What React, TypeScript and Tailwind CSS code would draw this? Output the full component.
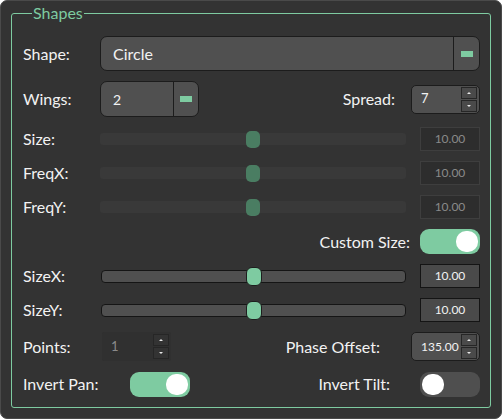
import React from 'react';

const GREEN = 'bg-[#7ecba1]';

function Label({ children, className = '' }: { children: React.ReactNode; className?: string }) {
  return <span className={`text-[16px] leading-none text-[#f2f2f2] ${className}`}>{children}</span>;
}

function DropArrow() {
  return <span className={`block w-[12px] h-[6px] ${GREEN}`} />;
}

function ComboBox({
  value,
  width,
  buttonWidth,
  textSize,
}: {
  value: string;
  width?: string;
  buttonWidth: string;
  textSize: string;
}) {
  return (
    <div
      className={`flex h-full ${width ?? 'flex-1'} rounded-[7px] border border-[#1c1c1c] bg-[#505050] overflow-hidden`}
    >
      <div className={`flex-1 flex items-center pl-[12px] ${textSize} text-[#f2f2f2]`}>{value}</div>
      <div className={`${buttonWidth} flex items-center justify-center border-l border-[#1c1c1c]`}>
        <DropArrow />
      </div>
    </div>
  );
}

function SpinArrows({ disabled = false }: { disabled?: boolean }) {
  const btn = `w-[16px] h-[12px] flex items-center justify-center border border-[#262626] ${
    disabled ? 'bg-[#333333]' : 'bg-[#4a4a4a]'
  }`;
  return (
    <div className="flex flex-col gap-[1px]">
      <div className={btn}>
        <span className="block w-0 h-0 border-x-[2px] border-x-transparent border-b-[2px] border-b-[#e8e8e8]" />
      </div>
      <div className={btn}>
        <span className="block w-0 h-0 border-x-[2px] border-x-transparent border-t-[2px] border-t-[#e8e8e8]" />
      </div>
    </div>
  );
}

function SpinBox({ value, disabled = false, small = false }: { value: string; disabled?: boolean; small?: boolean }) {
  return (
    <div
      className={`flex items-center justify-between w-[69px] h-[29px] pr-[2px] pl-[9px] ${
        disabled ? 'bg-[#303030] rounded-[2px]' : 'bg-[#505050] border border-[#1c1c1c] rounded-[5px]'
      }`}
    >
      <span
        className={`${small ? 'text-[12px]' : 'text-[13px]'} ${disabled ? 'text-[#8a8a8a]' : 'text-[#f2f2f2]'}`}
      >
        {value}
      </span>
      <SpinArrows disabled={disabled} />
    </div>
  );
}

function Slider({ enabled, pct }: { enabled: boolean; pct: number }) {
  return (
    <div className="relative flex-1 h-[19px] flex items-center">
      <div
        className={`w-full ${
          enabled ? 'h-[13px] bg-[#505050] border border-[#151515] rounded-[4px]' : 'h-[12px] bg-[#393939] rounded-[3px]'
        }`}
      />
      <div
        className={`absolute top-0 -translate-x-1/2 ${
          enabled
            ? 'w-[16px] h-[19px] bg-[#7ecba1] border border-[#1e1e1e] rounded-[6px]'
            : 'w-[14px] h-[17px] top-[1px] bg-[#4a7d62] rounded-[5px]'
        }`}
        style={{ left: `${pct}%` }}
      />
    </div>
  );
}

function ValueBox({ value, enabled }: { value: string; enabled: boolean }) {
  return (
    <div
      className={`w-[60px] h-[24px] flex items-center justify-center text-[12px] border ${
        enabled ? 'bg-[#4a4a4a] border-[#141414] text-[#f2f2f2]' : 'bg-[#2d2d2d] border-[#3e3e3e] text-[#8a8a8a]'
      }`}
    >
      {value}
    </div>
  );
}

function Toggle({ on }: { on: boolean }) {
  return (
    <div
      className={`w-[60px] h-[25px] rounded-[9px] p-[2px] flex items-center ${
        on ? `${GREEN} justify-end` : 'bg-[#4f4f4f] justify-start'
      }`}
    >
      <span className="block w-[22px] h-[21px] rounded-[10px] bg-white" />
    </div>
  );
}

function SliderRow({ label, enabled }: { label: string; enabled: boolean }) {
  return (
    <div className="flex items-center h-[24px]">
      <Label className="w-[77px]">{label}</Label>
      <div className={`flex-1 flex items-center ${enabled ? 'pl-[1px]' : ''}`}>
        <Slider enabled={enabled} pct={50} />
      </div>
      <div className="ml-[14px]">
        <ValueBox value="10.00" enabled={enabled} />
      </div>
    </div>
  );
}

export default function App() {
  return (
    <div className="w-[502px] h-[419px] bg-white">
      <div
        className="w-full h-full bg-[#333333] border border-[#4a4a4a] rounded-[7px] pt-[3px] px-[10px]"
        style={{ fontFamily: 'Lato, "Open Sans", sans-serif' }}
      >
        <fieldset className="w-[480px] h-[404px] border border-[#7ecba1] rounded-[3px] pl-[11px] pr-[10px] pt-[14px]">
          <legend className="ml-[9px] px-[1px] text-[16px] leading-[18px] text-[#7ecba1]">Shapes</legend>
          <div className="flex flex-col gap-[10px]">
            <div className="flex items-center h-[35px]">
              <Label className="w-[77px]">Shape:</Label>
              <ComboBox value="Circle" buttonWidth="w-[26px]" textSize="text-[16px]" />
            </div>
            <div className="flex items-center h-[36px]">
              <Label className="w-[77px]">Wings:</Label>
              <ComboBox value="2" width="w-[99px]" buttonWidth="w-[25px]" textSize="text-[14px]" />
              <Label className="ml-auto mr-[16px]">Spread:</Label>
              <SpinBox value="7" />
            </div>
            <SliderRow label="Size:" enabled={false} />
            <SliderRow label="FreqX:" enabled={false} />
            <SliderRow label="FreqY:" enabled={false} />
            <div className="flex items-center justify-end h-[25px]">
              <Label className="mr-[10px]">Custom Size:</Label>
              <Toggle on />
            </div>
            <SliderRow label="SizeX:" enabled />
            <SliderRow label="SizeY:" enabled />
            <div className="flex items-center h-[29px]">
              <Label className="w-[79px]">Points:</Label>
              <div className="w-[67px]">
                <SpinBox value="1" disabled />
              </div>
              <Label className="ml-auto mr-[31px]">Phase Offset:</Label>
              <SpinBox value="135.00" small />
            </div>
            <div className="flex items-center h-[26px]">
              <Label className="w-[107px]">Invert Pan:</Label>
              <Toggle on />
              <Label className="ml-auto mr-[30px]">Invert Tilt:</Label>
              <Toggle on={false} />
            </div>
          </div>
        </fieldset>
      </div>
    </div>
  );
}
